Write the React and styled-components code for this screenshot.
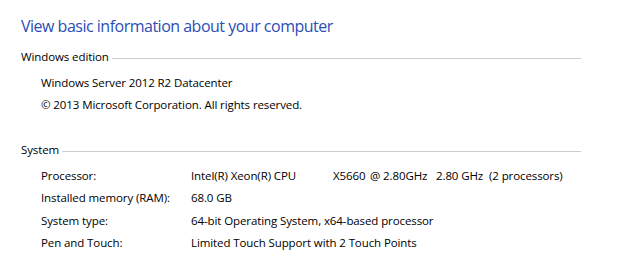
import styled, { createGlobalStyle } from "styled-components";

const Global = createGlobalStyle`
  body {
    margin: 0;
    background: #fff;
    font-family: "Open Sans", "Noto Sans", sans-serif;
    color: #000;
  }
`;

// processor line is laid out in fixed columns like the original dialog
const cpu = [
  { text: "Intel(R) Xeon(R) CPU", w: 142 },
  { text: "X5660", w: 37 },
  { text: "@ 2.80GHz", w: 66 },
  { text: "2.80 GHz", w: 53 },
  { text: "(2 processors)" },
];

const sections = [
  {
    title: "Windows edition",
    rows: [
      { value: "Windows Server 2012 R2 Datacenter" },
      { value: "© 2013 Microsoft Corporation. All rights reserved." },
    ],
  },
  {
    title: "System",
    rows: [
      { label: "Processor:", value: cpu },
      { label: "Installed memory (RAM):", value: "68.0 GB" },
      { label: "System type:", value: "64-bit Operating System, x64-based processor" },
      { label: "Pen and Touch:", value: "Limited Touch Support with 2 Touch Points" },
    ],
  },
];

function renderValue(v) {
  if (typeof v === "string") return v;
  return v.map((seg) => (
    <Seg key={seg.text} $w={seg.w}>
      {seg.text}
    </Seg>
  ));
}

export default function App() {
  return (
    <>
      <Global />
      <Page>
        <Title>View basic information about your computer</Title>
        {sections.map((sec) => (
          <Section key={sec.title}>
            <Header>
              <HeaderText>{sec.title}</HeaderText>
              <Rule />
            </Header>
            <Rows>
              {sec.rows.map((r, i) => (
                <Row key={i}>
                  {r.label && <Label>{r.label}</Label>}
                  <Value $full={!r.label}>{renderValue(r.value)}</Value>
                </Row>
              ))}
            </Rows>
          </Section>
        ))}
      </Page>
    </>
  );
}

const Page = styled.div`
  width: 560px;
  padding: 15px 0 0 21px;
`;
const Title = styled.h1`
  margin: 0;
  font-size: 16px;
  letter-spacing: -0.5px;
  font-weight: 400;
  line-height: 22px;
  color: #2b4db6;
`;
const Section = styled.section`
  margin-top: 9px;
  & + & {
    margin-top: 23px;
  }
`;
const Header = styled.div`
  display: flex;
  gap: 3px;
  font-size: 11.5px;
  letter-spacing: -0.1px;
  line-height: 22.5px;
`;
const HeaderText = styled.span`
  white-space: nowrap;
`;
const Rule = styled.div`
  flex: 1;
  height: 1px;
  margin-top: 12px;
  background: #cdcdcd;
`;
const Rows = styled.div`
  padding: 3px 0 0 20px;
`;
const Row = styled.div`
  display: grid;
  grid-template-columns: 150px 1fr;
  font-size: 11.5px;
  letter-spacing: -0.1px;
  line-height: 22.4px;
`;
const Label = styled.span``;
const Value = styled.span`
  white-space: nowrap;
  grid-column: ${(p) => (p.$full ? "1 / -1" : "auto")};
`;
const Seg = styled.span`
  display: inline-block;
  width: ${(p) => (p.$w ? `${p.$w}px` : "auto")};
`;
